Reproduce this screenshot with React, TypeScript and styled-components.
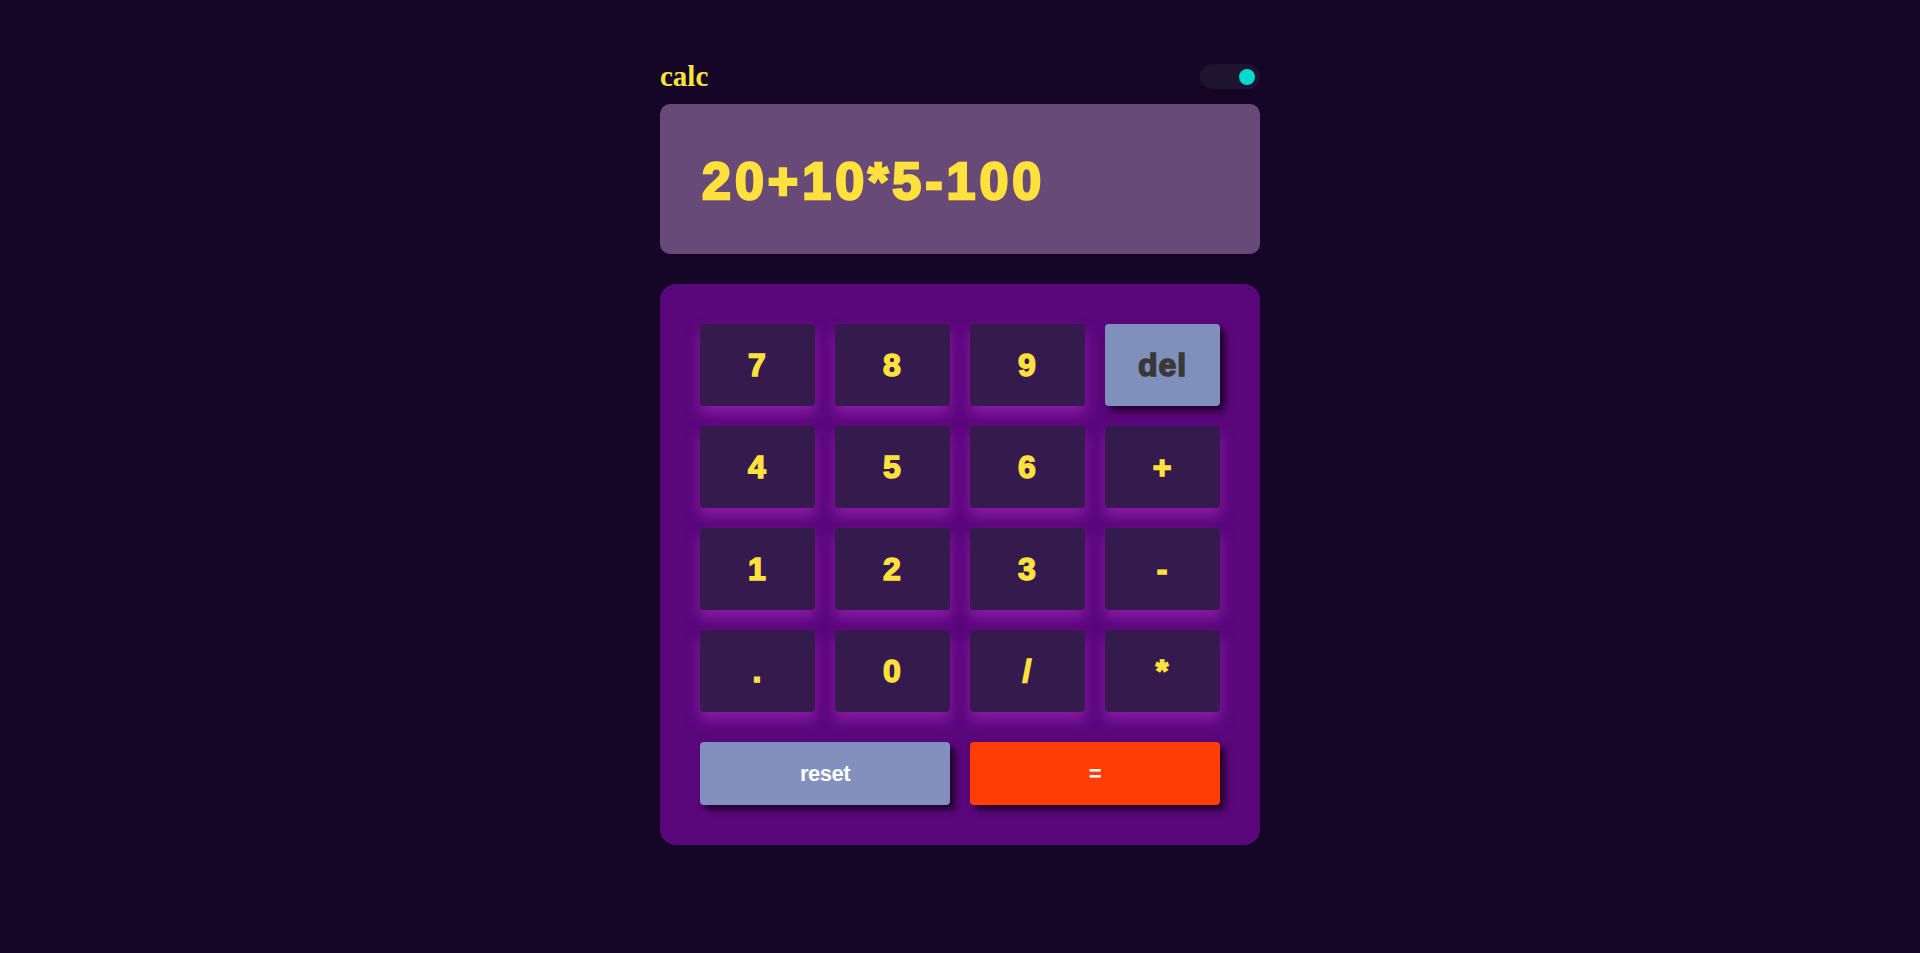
import styled, { createGlobalStyle } from 'styled-components';

const GlobalStyle = createGlobalStyle`
  html, body {
    margin: 0;
    padding: 0;
    background: #150628;
  }
`;

const keys = ['7', '8', '9', 'del', '4', '5', '6', '+', '1', '2', '3', '-', '.', '0', '/', '*'];

export default function App() {
  return (
    <>
      <GlobalStyle />
      <Page>
        <Calculator>
          <Header>
            <Title>calc</Title>
            <Toggle>
              <Knob />
            </Toggle>
          </Header>
          <Screen>
            <Expression>20+10*5-100</Expression>
          </Screen>
          <Keypad>
            <KeyGrid>
              {keys.map((k) => (k === 'del' ? <DelKey key={k}>{k}</DelKey> : <Key key={k}>{k}</Key>))}
            </KeyGrid>
            <BottomRow>
              <WideKey $variant='reset'>reset</WideKey>
              <WideKey $variant='equals'>=</WideKey>
            </BottomRow>
          </Keypad>
        </Calculator>
      </Page>
    </>
  );
}

const Page = styled.div`
  min-height: 953px;
  padding-top: 61px;
  box-sizing: border-box;
`;

const Calculator = styled.div`
  width: 600px;
  margin: 0 auto;
`;

const Header = styled.div`
  display: flex;
  justify-content: space-between;
  align-items: center;
  margin-bottom: 12px;
`;

const Title = styled.h1`
  margin: 0;
  font-family: 'Liberation Serif', 'Times New Roman', serif;
  font-size: 29px;
  font-weight: bold;
  line-height: 31px;
  color: #fde23c;
`;

const Toggle = styled.div`
  width: 60px;
  height: 25px;
  border-radius: 13px;
  background: #1f1430;
  display: flex;
  align-items: center;
  justify-content: flex-end;
  padding: 0 5px;
  box-sizing: border-box;
`;

const Knob = styled.span`
  width: 16px;
  height: 16px;
  border-radius: 50%;
  background: #00d9cf;
`;

const Screen = styled.div`
  height: 150px;
  border-radius: 10px;
  background: #674a77;
  display: flex;
  align-items: center;
  padding: 4px 42px 0;
  box-sizing: border-box;
`;

const Expression = styled.span`
  font-family: 'Liberation Sans', Arial, sans-serif;
  font-weight: bold;
  font-size: 52px;
  letter-spacing: 4px;
  color: #fee13c;
  -webkit-text-stroke: 2.5px #fee13c;
`;

const Keypad = styled.div`
  margin-top: 30px;
  background: #5a077b;
  border-radius: 16px;
  padding: 40px;
`;

const KeyGrid = styled.div`
  display: grid;
  grid-template-columns: repeat(4, 115px);
  grid-auto-rows: 82px;
  gap: 20px;
`;

const Key = styled.button`
  border: none;
  border-radius: 4px;
  background: #351a4d;
  color: #fee13c;
  font-family: 'Liberation Sans', Arial, sans-serif;
  font-weight: bold;
  font-size: 32px;
  letter-spacing: 1px;
  -webkit-text-stroke: 1.5px #fee13c;
  box-shadow: 0 8px 14px #8a1ca6;
  cursor: pointer;
  padding: 0;
`;

const DelKey = styled(Key)`
  background: #8090bc;
  color: #383838;
  -webkit-text-stroke: 1.5px #383838;
  box-shadow: 5px 5px 7px rgba(0, 0, 0, 0.65);
`;

const BottomRow = styled.div`
  display: grid;
  grid-template-columns: 1fr 1fr;
  gap: 20px;
  margin-top: 30px;
`;

const WideKey = styled.button<{ $variant: 'reset' | 'equals' }>`
  height: 63px;
  border: none;
  border-radius: 4px;
  background: ${(p) => (p.$variant === 'reset' ? '#8190bc' : '#ff3d04')};
  color: #ffffff;
  font-family: 'Liberation Sans', Arial, sans-serif;
  font-weight: bold;
  font-size: 22px;
  letter-spacing: -0.5px;
  box-shadow: 5px 5px 7px rgba(0, 0, 0, 0.65);
  cursor: pointer;
  padding: 0;
`;
